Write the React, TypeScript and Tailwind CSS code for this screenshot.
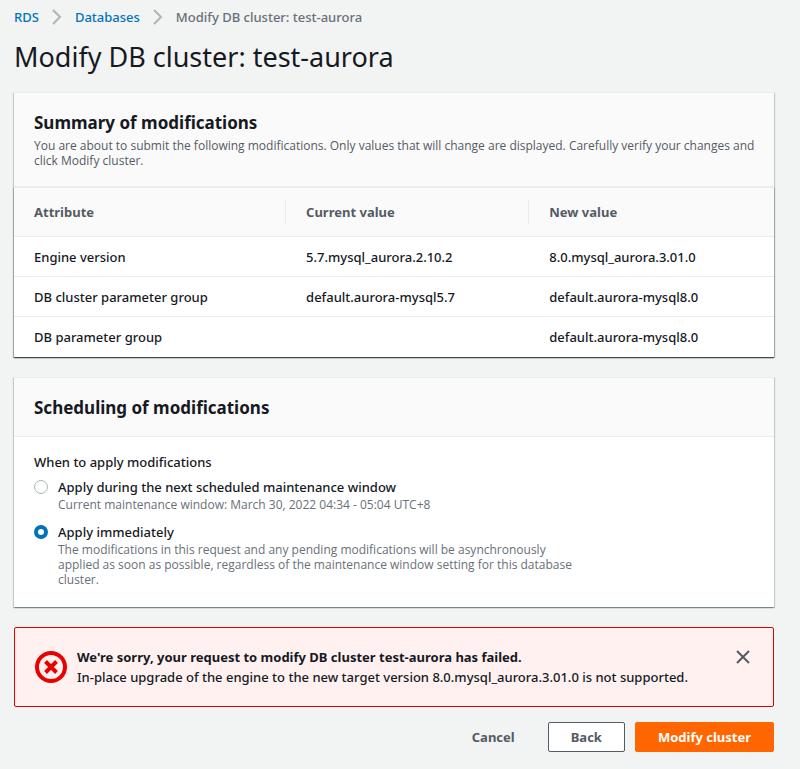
import React, { useState } from "react";

const cardShadow =
  "shadow-[0_1px_1px_0_rgba(0,28,36,0.3),1px_1px_1px_0_rgba(0,28,36,0.15),-1px_1px_1px_0_rgba(0,28,36,0.15)]";

const modifications = [
  { attribute: "Engine version", current: "5.7.mysql_aurora.2.10.2", next: "8.0.mysql_aurora.3.01.0" },
  { attribute: "DB cluster parameter group", current: "default.aurora-mysql5.7", next: "default.aurora-mysql8.0" },
  { attribute: "DB parameter group", current: "", next: "default.aurora-mysql8.0" },
];

const schedules = [
  {
    id: "maintenance-window",
    label: "Apply during the next scheduled maintenance window",
    hint: "Current maintenance window: March 30, 2022 04:34 - 05:04 UTC+8",
  },
  {
    id: "immediately",
    label: "Apply immediately",
    hint: "The modifications in this request and any pending modifications will be asynchronously applied as soon as possible, regardless of the maintenance window setting for this database cluster.",
  },
];

function Chevron() {
  return (
    <svg className="h-4 w-[10px] shrink-0" viewBox="0 0 10 16" fill="none" stroke="#aab7b8" strokeWidth="2" aria-hidden="true">
      <path d="M1 1l7 7-7 7" />
    </svg>
  );
}

function Breadcrumbs() {
  return (
    <nav aria-label="Breadcrumbs">
      <ol className="flex items-center gap-[13px] text-[13px] leading-5 font-medium">
        <li>
          <a href="#rds" className="text-[#0073bb]">RDS</a>
        </li>
        <li className="flex items-center gap-[13px]">
          <Chevron />
          <a href="#databases" className="text-[#0073bb]">Databases</a>
        </li>
        <li className="flex items-center gap-[13px] text-[#687078]">
          <Chevron />
          <span>Modify DB cluster: test-aurora</span>
        </li>
      </ol>
    </nav>
  );
}

function Summary() {
  return (
    <section className={`mt-[17px] border-t border-[#eaeded] bg-white ${cardShadow}`}>
      <header className="border-b border-[#eaeded] bg-[#fafafa] pt-4 pr-4 pb-[18px] pl-5">
        <h2 className="text-[17px] leading-7 font-bold">Summary of modifications</h2>
        <p className="mt-px font-['Open_Sans',sans-serif] text-xs leading-[15px] text-[#545b64]">
          You are about to submit the following modifications. Only values that will change are displayed. Carefully
          verify your changes and click Modify cluster.
        </p>
      </header>
      <table className={`w-full table-fixed border-collapse text-left text-[13px] leading-5 ${cardShadow}`}>
        <colgroup>
          <col className="w-[35.8%]" />
          <col className="w-[32%]" />
          <col className="w-[32.2%]" />
        </colgroup>
        <thead>
          <tr className="border-y border-[#eaeded] bg-[#fafafa] text-[#545b64]">
            {["Attribute", "Current value", "New value"].map((name, i) => (
              <th key={name} scope="col" className="p-0 py-3 font-bold">
                <div className={i < 2 ? "border-r border-[#eaeded] px-5 py-0.5" : "px-5 py-0.5"}>{name}</div>
              </th>
            ))}
          </tr>
        </thead>
        <tbody className="font-medium">
          {modifications.map((row) => (
            <tr key={row.attribute} className="h-10 border-b border-[#eaeded] last:border-b-0">
              <td className="px-5">{row.attribute}</td>
              <td className="px-5">{row.current}</td>
              <td className="px-5">{row.next}</td>
            </tr>
          ))}
        </tbody>
      </table>
    </section>
  );
}

function Scheduling() {
  const [selected, setSelected] = useState("immediately");
  return (
    <section className={`mt-5 border-t border-[#eaeded] bg-white ${cardShadow}`}>
      <header className="border-b border-[#eaeded] bg-[#fafafa] px-5 pt-4 pb-[14px]">
        <h2 className="text-[17px] leading-7 font-bold">Scheduling of modifications</h2>
      </header>
      <fieldset className="px-5 pt-[15px] pb-5">
        <legend className="float-left mb-[5px] w-full text-[13px] leading-5 font-medium">When to apply modifications</legend>
        <div className="clear-both flex max-w-[550px] flex-col gap-[10px]">
          {schedules.map((option) => (
            <div key={option.id} className="flex items-start gap-[10px]">
              <input
                id={option.id}
                type="radio"
                name="schedule"
                checked={selected === option.id}
                onChange={() => setSelected(option.id)}
                aria-describedby={`${option.id}-hint`}
                className="mt-[3px] h-[14px] w-[14px] shrink-0 appearance-none rounded-full border border-[#aab7b8] bg-white checked:border-4 checked:border-[#0073bb]"
              />
              <div>
                <label htmlFor={option.id} className="block text-[13px] leading-5 font-medium">{option.label}</label>
                <p id={`${option.id}-hint`} className="font-['Open_Sans',sans-serif] text-xs leading-[15px] text-[#687078]">{option.hint}</p>
              </div>
            </div>
          ))}
        </div>
      </fieldset>
    </section>
  );
}

function ErrorAlert({ onDismiss }: { onDismiss: () => void }) {
  return (
    <div role="alert" className="mt-5 flex items-start rounded-xs border border-[#df0000] bg-[#fff1f0] px-5 py-[19px] text-[13px] leading-5">
      <svg className="mt-1 mr-[10px] h-8 w-8 shrink-0" viewBox="0 0 32 32" fill="none" stroke="#eb0000" strokeWidth="4" aria-hidden="true">
        <circle cx="16" cy="16" r="14" />
        <path d="M10.5 10.5l11 11M21.5 10.5l-11 11" />
      </svg>
      <div className="flex-1">
        <p className="font-bold">We're sorry, your request to modify DB cluster test-aurora has failed.</p>
        <p className="font-medium">In-place upgrade of the engine to the new target version 8.0.mysql_aurora.3.01.0 is not supported.</p>
      </div>
      <button type="button" aria-label="Dismiss" onClick={onDismiss} className="mt-0.5 mr-0.5 shrink-0 text-[#545b64]">
        <svg className="h-4 w-4" viewBox="0 0 16 16" fill="none" stroke="currentColor" strokeWidth="2" aria-hidden="true">
          <path d="M2 2l12 12M14 2L2 14" />
        </svg>
      </button>
    </div>
  );
}

export default function App() {
  const [showError, setShowError] = useState(true);
  return (
    <main className="min-h-screen bg-[#f2f3f3] pt-[7px] pr-[26px] pb-4 pl-[14px] font-['Noto_Sans',sans-serif] text-[#16191f]">
      <Breadcrumbs />
      <h1 className="mt-3 text-[27px] leading-9">Modify DB cluster: test-aurora</h1>
      <Summary />
      <Scheduling />
      {showError && <ErrorAlert onDismiss={() => setShowError(false)} />}
      <div className="mt-[15px] flex justify-end gap-[10px] text-[13px] leading-5 font-bold">
        <button type="button" className="rounded-xs border border-transparent px-[22px] py-1 text-[#545b64]">Cancel</button>
        <button type="button" className="rounded-xs border border-[#545b64] bg-white px-[22px] py-1 text-[#545b64]">Back</button>
        <button type="button" className="rounded-xs border border-[#ff6600] bg-[#ff6600] px-[22px] py-1 text-white">Modify cluster</button>
      </div>
    </main>
  );
}
